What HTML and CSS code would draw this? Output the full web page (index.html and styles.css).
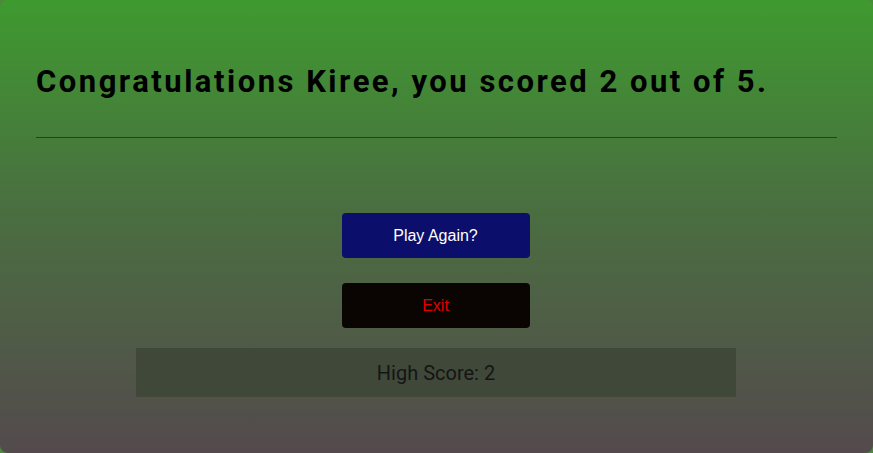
FILE: index.html
```html
<!DOCTYPE html>
<html>
<head>
<meta charset="utf-8">
<link rel="stylesheet" href="styles.css">
</head>
<body>
<div class="card">
  <h1 class="title">Congratulations Kiree, you scored 2 out of 5.</h1>
  <hr class="rule">
  <div class="actions">
    <button class="btn btn-play">Play Again?</button>
    <button class="btn btn-exit">Exit</button>
  </div>
  <div class="high">High Score: 2</div>
</div>
</body>
</html>
```
FILE: styles.css
```css
html, body {
  margin: 0;
  padding: 0;
  background: #4a8a3a;
}
.card {
  box-sizing: border-box;
  width: 873px;
  height: 453px;
  border-radius: 8px;
  background: linear-gradient(to bottom, #3e9a2f 0%, #4a6f40 45%, #544a4d 100%);
  padding: 54px 36px 0 36px;
  font-family: Roboto, sans-serif;
  overflow: hidden;
}
.title {
  margin: 0;
  font-size: 31px;
  font-weight: 700;
  letter-spacing: 2.5px;
  color: #000;
  line-height: 56px;
}
.rule {
  margin: 27px 0 0 0;
  border: 0;
  border-top: 1px solid #2e3a2a;
  height: 0;
}
.actions {
  display: flex;
  flex-direction: column;
  align-items: center;
  gap: 25px;
  margin-top: 75px;
  padding-right: 2px;
}
.btn {
  width: 188px;
  height: 45px;
  border: 0;
  border-radius: 4px;
  font-family: "Liberation Sans", Arial, sans-serif;
  font-size: 16px;
}
.btn-play {
  background: #0b0e6b;
  color: #fff;
}
.btn-exit {
  background: #0a0502;
  color: #e00000;
}
.high {
  width: 600px;
  height: 49px;
  margin: 20px 0 0 100px;
  background: #3f4839;
  display: flex;
  align-items: center;
  justify-content: center;
  font-size: 20px;
  color: #151515;
}
```
